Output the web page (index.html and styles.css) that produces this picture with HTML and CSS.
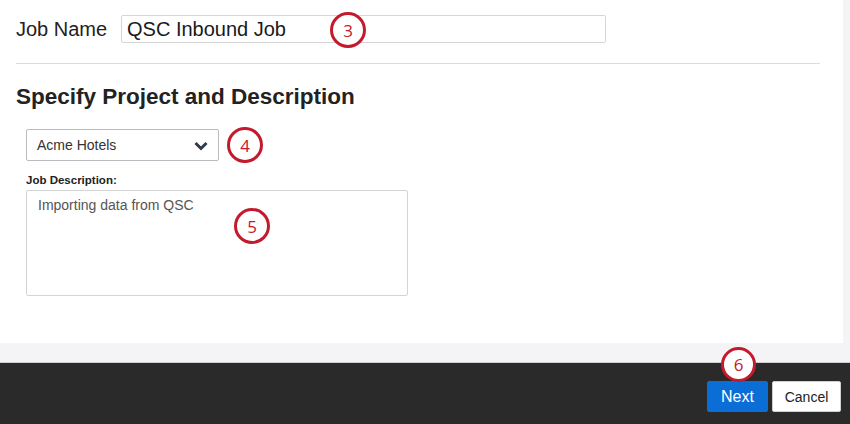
FILE: index.html
```html
<!DOCTYPE html>
<html lang="en">
<head>
  <meta charset="UTF-8">
  <title>Create Job</title>
  <link rel="stylesheet" href="styles.css">
</head>
<body>
  <div class="page">
    <div class="panel">
      <div class="job-row">
        <label class="job-label" for="jobName">Job Name</label>
        <div class="field-wrap">
          <input type="text" id="jobName" class="job-input" value="QSC Inbound Job">
          <span class="step step-3">3</span>
        </div>
      </div>

      <hr class="divider">

      <h2 class="section-title">Specify Project and Description</h2>

      <div class="field-wrap select-wrap">
        <div class="select">
          <span>Acme Hotels</span>
          <svg class="chevron" width="14" height="10" viewBox="0 0 14 10">
            <path d="M1.5 2 L7 7.5 L12.5 2" fill="none" stroke="#2e3c48" stroke-width="3"/>
          </svg>
        </div>
        <span class="step step-4">4</span>
      </div>

      <div class="desc-label">Job Description:</div>
      <div class="field-wrap desc-wrap">
        <textarea class="desc" id="jobDesc">Importing data from QSC</textarea>
        <span class="step step-5">5</span>
      </div>
    </div>
    <div class="side"></div>
  </div>

  <div class="gap"></div>

  <div class="footer">
    <div class="field-wrap">
      <button class="btn btn-next">Next</button>
      <span class="step step-6">6</span>
    </div>
    <button class="btn btn-cancel">Cancel</button>
  </div>
</body>
</html>
```

FILE: styles.css
```css
body {
  margin: 0;
  font-family: "Liberation Sans", Arial, sans-serif;
  color: #222;
  background: #f4f4f6;
}
.page {
  display: flex;
  height: 343px;
}
.panel {
  width: 843px;
  background: #fff;
  padding: 15px 0 0 16px;
  box-sizing: border-box;
}
.side {
  flex: 1;
  background: #f4f4f6;
}
.field-wrap {
  position: relative;
}
.job-row {
  display: flex;
  align-items: center;
}
.job-label {
  font-size: 20px;
  width: 105px;
  color: #222;
}
.job-input {
  width: 485px;
  height: 28px;
  box-sizing: border-box;
  border: 1px solid #d6d6d6;
  border-radius: 2px;
  padding: 0 5px;
  font-family: "Liberation Sans", Arial, sans-serif;
  font-size: 20px;
  color: #1a1a1a;
  outline: none;
}
.divider {
  border: 0;
  border-top: 1px solid #dcdcdc;
  margin: 20px 0 0 0;
  width: 804px;
}
.section-title {
  font-size: 22.5px;
  font-weight: bold;
  margin: 20px 0 0 0;
  color: #222;
  line-height: 26px;
}
.select-wrap {
  margin: 19px 0 0 10px;
  width: 193px;
}
.select {
  height: 32px;
  box-sizing: border-box;
  border: 1px solid #b8bcc0;
  border-radius: 2px;
  display: flex;
  align-items: center;
  justify-content: space-between;
  padding: 0 10px 0 10px;
  font-size: 14px;
  color: #333;
}
.chevron {
  margin-top: 1px;
}
.desc-label {
  font-size: 11.5px;
  font-weight: bold;
  margin: 13px 0 0 10px;
  color: #222;
}
.desc-wrap {
  margin: 4px 0 0 10px;
  width: 382px;
}
.desc {
  display: block;
  width: 382px;
  height: 106px;
  box-sizing: border-box;
  border: 1px solid #d4d4d4;
  border-radius: 2px;
  padding: 6px 11px;
  font-family: "Liberation Sans", Arial, sans-serif;
  font-size: 14px;
  color: #555;
  resize: none;
  outline: none;
}
.step {
  position: absolute;
  width: 36px;
  height: 36px;
  box-sizing: border-box;
  border: 3px solid #c41a2e;
  border-radius: 50%;
  background: #fff;
  color: #c41a2e;
  font-family: "Open Sans", sans-serif;
  font-size: 17px;
  display: flex;
  align-items: center;
  justify-content: center;
}
.step-3 {
  left: 209px;
  top: -3px;
}
.step-4 {
  left: 201px;
  top: -2px;
}
.step-5 {
  left: 208px;
  top: 18px;
}
.step-6 {
  left: 14px;
  top: -34px;
  width: 35px;
  height: 35px;
}
.gap {
  height: 19px;
  background: #f4f4f6;
}
.footer {
  height: 62px;
  box-sizing: border-box;
  background: #2a2a2a;
  border-top: 1px solid #cfcfcf;
  display: flex;
  justify-content: flex-end;
  align-items: flex-start;
  gap: 4px;
  padding: 18px 9px 0 0;
}
.btn {
  height: 31px;
  font-family: "Liberation Sans", Arial, sans-serif;
  font-size: 15px;
  border-radius: 2px;
  cursor: pointer;
}
.btn-next {
  width: 61px;
  background: #0b6ed6;
  border: 1px solid #0b6ed6;
  color: #fff;
  font-size: 16px;
}
.btn-cancel {
  width: 69px;
  background: #fff;
  border: 1px solid #cfcfcf;
  color: #222;
  font-size: 14px;
}
```
